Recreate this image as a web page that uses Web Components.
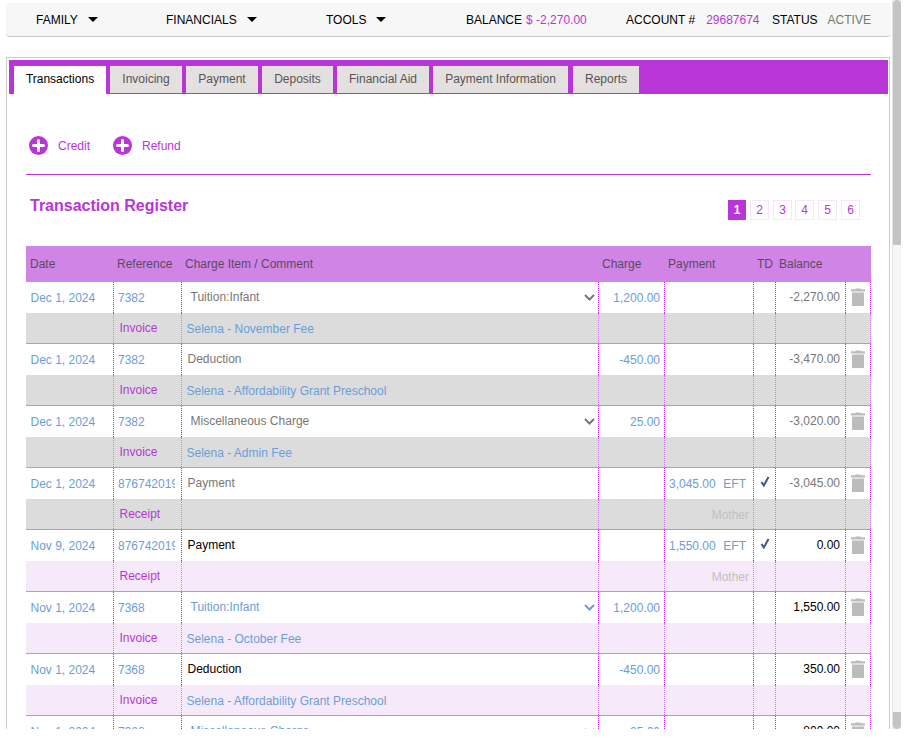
<!DOCTYPE html>
<html>
<head>
<meta charset="utf-8">
<title>Transaction Register</title>
<style>
  html, body { margin: 0; padding: 0; background: #fff; overflow: hidden; }
  body { font-family: "Liberation Sans", Arial, sans-serif; font-size: 12px; }
</style>
</head>
<body>
<app-shell>
  <top-nav></top-nav>
  <tab-panel>
    <action-link>Credit</action-link>
    <action-link>Refund</action-link>
  </tab-panel>
</app-shell>

<script>
const PURPLE = '#b836d8';
const BLUE = '#6a9edb';

const registros = [
  { fecha: 'Dec 1, 2024', ref: '7382', item: 'Tuition:Infant', select: true, charge: '1,200.00', balance: '-2,270.00', tipo: 'Invoice', nota: 'Selena - November Fee', modo: 'old' },
  { fecha: 'Dec 1, 2024', ref: '7382', item: 'Deduction', charge: '-450.00', balance: '-3,470.00', tipo: 'Invoice', nota: 'Selena - Affordability Grant Preschool', modo: 'old' },
  { fecha: 'Dec 1, 2024', ref: '7382', item: 'Miscellaneous Charge', select: true, charge: '25.00', balance: '-3,020.00', tipo: 'Invoice', nota: 'Selena - Admin Fee', modo: 'old' },
  { fecha: 'Dec 1, 2024', ref: '876742019', item: 'Payment', pago: '3,045.00', metodo: 'EFT', td: true, balance: '-3,045.00', tipo: 'Receipt', quien: 'Mother', modo: 'old' },
  { fecha: 'Nov 9, 2024', ref: '876742019', item: 'Payment', pago: '1,550.00', metodo: 'EFT', td: true, balance: '0.00', tipo: 'Receipt', quien: 'Mother', modo: 'new', itemColor: '#000' },
  { fecha: 'Nov 1, 2024', ref: '7368', item: 'Tuition:Infant', select: true, charge: '1,200.00', balance: '1,550.00', tipo: 'Invoice', nota: 'Selena - October Fee', modo: 'new', itemColor: BLUE },
  { fecha: 'Nov 1, 2024', ref: '7368', item: 'Deduction', charge: '-450.00', balance: '350.00', tipo: 'Invoice', nota: 'Selena - Affordability Grant Preschool', modo: 'new', itemColor: '#000' },
  { fecha: 'Nov 1, 2024', ref: '7368', item: 'Miscellaneous Charge', select: true, charge: '25.00', balance: '800.00', tipo: 'Invoice', nota: 'Selena - Admin Fee', modo: 'new', itemColor: BLUE }
];

class AppShell extends HTMLElement {
  constructor() {
    super();
    this.attachShadow({ mode: 'open' });
    this.shadowRoot.innerHTML = `
      <style>
        :host { display: flex; width: 906px; height: 739px; background: #fff; color: #000; }
        .main { width: 892px; height: 729px; overflow: hidden; padding: 3px 0 0 6px; box-sizing: border-box; }
        .bar { width: 9px; height: 729px; background: #f6f6f6; border-left: 1px solid #e4e4e4; box-sizing: border-box; display: flex; flex-direction: column; justify-content: space-between; }
        .thumb { background: #c4c4c4; }
        .up { height: 245px; border-radius: 5px 5px 0 0; }
        .down { height: 17px; border-radius: 0 0 5px 5px; }
      </style>
      <div class="main"><slot></slot></div>
      <div class="bar"><div class="thumb up"></div><div class="thumb down"></div></div>
    `;
  }
}

class NavMenu extends HTMLElement {
  constructor() {
    super();
    this.attachShadow({ mode: 'open' });
    this.shadowRoot.innerHTML = `
      <style>
        :host { display: flex; align-items: center; gap: 10px; }
        svg { display: block; }
      </style>
      <slot></slot>
      <svg width="10" height="5" viewBox="0 0 10 5"><path d="M0 0H10L5 5Z" fill="#000"/></svg>
    `;
  }
}

class TopNav extends HTMLElement {
  constructor() {
    super();
    this.attachShadow({ mode: 'open' });
    this.shadowRoot.innerHTML = `
      <style>
        :host { display: flex; align-items: center; width: 885px; height: 34px; padding-left: 30px; box-sizing: border-box; background: #f7f7f7; border-bottom: 1px solid #c8c8c8; border-radius: 4px; font: 12px "Liberation Sans", Arial, sans-serif; color: #000; }
        .c1 { width: 130px; } .c2 { width: 160px; } .c3 { width: 140px; }
        .bal { width: 160px; } .acc { width: 146px; }
        .p { color: ${PURPLE}; }
        .v { margin-left: 4px; }
        .acc .v { margin-left: 11px; }
        .st .v { margin-left: 10px; color: #6f7f62; }
      </style>
      <nav-menu class="c1">FAMILY</nav-menu>
      <nav-menu class="c2">FINANCIALS</nav-menu>
      <nav-menu class="c3">TOOLS</nav-menu>
      <div class="bal">BALANCE<span class="v p">$ -2,270.00</span></div>
      <div class="acc">ACCOUNT #<span class="v p">29687674</span></div>
      <div class="st">STATUS<span class="v">ACTIVE</span></div>
    `;
  }
}

class TabItem extends HTMLElement {
  constructor() {
    super();
    this.attachShadow({ mode: 'open' });
    this.shadowRoot.innerHTML = `
      <style>
        :host { display: flex; align-items: center; justify-content: center; height: 27px; padding-bottom: 2px; background: #e4e0e0; color: #555; box-sizing: border-box; }
        :host([active]) { background: #fff; color: #000; height: 28px; padding-bottom: 3px; }
      </style>
      <slot></slot>
    `;
  }
}

class ActionLink extends HTMLElement {
  constructor() {
    super();
    this.attachShadow({ mode: 'open' });
    this.shadowRoot.innerHTML = `
      <style>
        :host { display: flex; align-items: center; gap: 10px; width: 84px; height: 19px; color: ${PURPLE}; }
        svg { display: block; flex: none; }
      </style>
      <svg width="19" height="19" viewBox="0 0 19 19">
        <circle cx="9.5" cy="9.5" r="9.5" fill="${PURPLE}"/>
        <path d="M9.5 4.5V14.5M4.5 9.5H14.5" stroke="#fff" stroke-width="3" stroke-linecap="round"/>
      </svg>
      <slot></slot>
    `;
  }
}

class PageNumbers extends HTMLElement {
  constructor() {
    super();
    this.attachShadow({ mode: 'open' });
    const paginas = [1, 2, 3, 4, 5, 6].map(n => `<span class="${n === 1 ? 'on' : ''}">${n}</span>`).join('');
    this.shadowRoot.innerHTML = `
      <style>
        :host { display: flex; gap: 4px; margin-top: 3px; color: ${PURPLE}; }
        span { display: flex; align-items: center; justify-content: center; width: 19px; height: 20px; box-sizing: border-box; border: 1px solid #f5e6fa; }
        span:nth-child(5) { margin-left: -1px; }
        .on { width: 18px; background: ${PURPLE}; border-color: ${PURPLE}; color: #fff; font-weight: bold; }
      </style>
      ${paginas}
    `;
  }
}

class TxRow extends HTMLElement {
  constructor() {
    super();
    this.attachShadow({ mode: 'open' });
  }

  set data(r) {
    const gris = '#777';
    const color = r.itemColor || gris;
    const bal = r.modo === 'old' ? gris : '#000';
    const chevron = r.select ? `
      <svg class="chev" width="11" height="7" viewBox="0 0 11 7"><path d="M1 1L5.5 5.5L10 1" fill="none" stroke="${color}" stroke-width="2"/></svg>` : '';
    const pago = r.pago ? `<span>${r.pago}</span><span>${r.metodo}</span>` : '';
    const check = r.td ? `
      <svg width="10" height="11" viewBox="0 0 10 11"><path d="M1.5 6L3.8 9.5L8.5 1" fill="none" stroke="#47548f" stroke-width="2"/></svg>` : '';
    this.shadowRoot.innerHTML = `
      <style>
        :host { display: block; font: 12px "Liberation Sans", Arial, sans-serif; }
        .fila { display: grid; grid-template-columns: 87px 68px 417px 66px 89px 22px 70px 26px; }
        .top { height: 31px; background: #fff; }
        .sub { height: 31px; box-sizing: border-box; border-bottom: 1px solid #c98ae4; background: ${r.modo === 'old' ? '#dcdcdc' : '#f6eafa'}; }
        .fila > div { box-sizing: border-box; display: flex; align-items: center; min-width: 0; overflow: hidden; white-space: nowrap; }
        .fila > div + div { border-left: 1px dotted #c01cf0; }
        .sub > div + div { border-left-color: #c67fe6; }
        .fila > div:last-child { border-right: 1px dotted #c01cf0; }
        .sub > div:last-child { border-right-color: #c67fe6; }
        .blue { color: ${BLUE}; }
        .date { padding-left: 4.5px; }
        .ref { padding-left: 4px; }
        .ref span { display: block; width: 57px; overflow: hidden; }
        .item { color: ${color}; padding: 0 3px 2px ${r.select ? '8.5px' : '5.5px'}; justify-content: space-between; }
        .chev { margin: 2px 0 0 0; }
        .num { justify-content: flex-end; padding-right: 4px; }
        .pago { padding: 0 7px 0 4px; justify-content: space-between; }
        .td { justify-content: center; padding-bottom: 5px; }
        .bal { justify-content: flex-end; padding: 0 5px 2px 0; color: ${bal}; }
        .del { justify-content: center; padding-bottom: 2px; }
        .tipo { color: ${PURPLE}; padding-left: 5.5px; }
        .nota { padding: 2px 0 0 4.5px; }
        .quien { justify-content: flex-end; padding: 2px 4px 0 0; color: #bfbfbf; }
        svg { display: block; flex: none; }
      </style>
      <div class="fila top">
        <div class="date blue">${r.fecha}</div>
        <div class="ref blue"><span>${r.ref}</span></div>
        <div class="item"><span>${r.item}</span>${chevron}</div>
        <div class="num blue">${r.charge || ''}</div>
        <div class="pago blue">${pago}</div>
        <div class="td">${check}</div>
        <div class="bal">${r.balance}</div>
        <div class="del"><svg width="16" height="18" viewBox="0 0 16 18"><path d="M5.5 1.2V0.4H10.5V1.2H15V3.6H1V1.2Z M2 4.6H14V18H2Z" fill="#bcbcbc"/></svg></div>
      </div>
      <div class="fila sub">
        <div></div>
        <div class="tipo">${r.tipo}</div>
        <div class="nota blue">${r.nota || ''}</div>
        <div></div>
        <div class="quien">${r.quien || ''}</div>
        <div></div>
        <div></div>
        <div></div>
      </div>
    `;
  }
}

class TxTable extends HTMLElement {
  constructor() {
    super();
    this.attachShadow({ mode: 'open' });
    this.shadowRoot.innerHTML = `
      <style>
        :host { display: block; font: 12px "Liberation Sans", Arial, sans-serif; }
        .head { display: grid; grid-template-columns: 91px 68px 417px 66px 89px 22px 92px; height: 36px; align-items: center; background: #d084e6; color: #5a4a5e; }
        .head span { display: block; }
        .p4 { padding-left: 4px; }
      </style>
      <div class="head">
        <span class="p4">Date</span>
        <span>Reference</span>
        <span>Charge Item / Comment</span>
        <span>Charge</span>
        <span>Payment</span>
        <span>TD</span>
        <span>Balance</span>
      </div>
      <div id="filas"></div>
    `;
  }

  connectedCallback() {
    const cont = this.shadowRoot.querySelector('#filas');
    registros.forEach(r => {
      const fila = document.createElement('tx-row');
      fila.data = r;
      cont.appendChild(fila);
    });
  }
}

class TabPanel extends HTMLElement {
  constructor() {
    super();
    this.attachShadow({ mode: 'open' });
    const tabs = ['Transactions', 'Invoicing', 'Payment', 'Deposits', 'Financial Aid', 'Payment Information', 'Reports'];
    const anchos = [92, 72, 72, 71, 92, 135, 66];
    const items = tabs.map((t, i) => `<tab-item style="width:${anchos[i]}px${i === 6 ? ';margin-left:1px' : ''}" ${i === 0 ? 'active' : ''}>${t}</tab-item>`).join('');
    this.shadowRoot.innerHTML = `
      <style>
        :host { display: block; width: 884px; margin-top: 20px; padding: 2px 1px 0 2px; box-sizing: border-box; border: 1px solid #ccc; border-bottom: 0; background: #fff; font: 12px "Liberation Sans", Arial, sans-serif; }
        .strip { display: flex; align-items: flex-start; gap: 4px; height: 34px; padding: 6px 0 0 5px; box-sizing: border-box; background: ${PURPLE}; }
        .body { padding: 42px 17px 0; }
        .actions { display: flex; height: 19px; align-items: center; padding: 0 0 19px 3px; border-bottom: 1px solid ${PURPLE}; }
        .head { display: flex; justify-content: space-between; height: 71px; padding: 22px 11px 0 4px; box-sizing: border-box; }
        h2 { margin: 0; font-size: 16px; line-height: 18px; font-weight: bold; color: ${PURPLE}; }
      </style>
      <div class="strip">${items}</div>
      <div class="body">
        <div class="actions"><slot></slot></div>
        <div class="head">
          <h2>Transaction Register</h2>
          <page-numbers></page-numbers>
        </div>
        <tx-table></tx-table>
      </div>
    `;
  }
}

customElements.define('app-shell', AppShell);
customElements.define('nav-menu', NavMenu);
customElements.define('top-nav', TopNav);
customElements.define('tab-item', TabItem);
customElements.define('action-link', ActionLink);
customElements.define('page-numbers', PageNumbers);
customElements.define('tx-row', TxRow);
customElements.define('tx-table', TxTable);
customElements.define('tab-panel', TabPanel);
</script>
</body>
</html>
